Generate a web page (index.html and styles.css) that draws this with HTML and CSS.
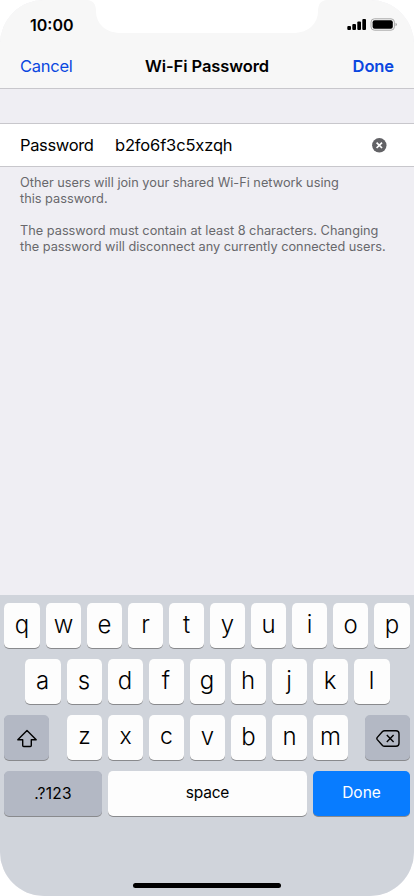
FILE: index.html
```html
<!DOCTYPE html>
<html lang="en">
<head>
    <meta charset="UTF-8">
    <meta name="viewport" content="width=device-width, initial-scale=1.0">
    <title>Wi-Fi Password</title>
    <link rel="stylesheet" href="styles.css">
</head>
<body>
    <div class="phone">
        <!-- Status bar -->
        <div class="status-bar">
            <span class="time">10:00</span>
            <svg class="status-icons" width="52" height="14" viewBox="0 0 52 14">
                <rect x="0.3" y="8" width="3.7" height="4" rx="1"/>
                <rect x="5.3" y="6" width="3.7" height="6" rx="1"/>
                <rect x="10.3" y="3.6" width="3.7" height="8.4" rx="1"/>
                <rect x="15.3" y="1" width="3.7" height="11" rx="1"/>
                <rect x="24" y="0.8" width="23.4" height="11.4" rx="3.4" fill="none" stroke="#a9a9a9"/>
                <rect x="25.6" y="2.3" width="20.2" height="8.4" rx="2"/>
                <path d="M48.5 4.7q1.4 .5 1.4 1.8t-1.4 1.8z" fill="#a9a9a9"/>
            </svg>
        </div>
        <svg class="notch" width="240" height="34" viewBox="0 0 240 34">
            <path d="M0 0C6 .4 9 4 9 11C9 24 19 33 34 33H206C221 33 231 24 231 11C231 4 234 .4 240 0Z" fill="#fff"/>
        </svg>

        <!-- Navigation -->
        <div class="nav">
            <a class="nav-link">Cancel</a>
            <h1 class="title">Wi-Fi Password</h1>
            <a class="nav-link done">Done</a>
        </div>

        <div class="content">
            <div class="password-row">
                <span class="label">Password</span>
                <span class="value">b2fo6f3c5xzqh</span>
                <svg class="clear" width="16" height="16" viewBox="0 0 16 16">
                    <circle cx="8.3" cy="8.3" r="7.2" fill="#626266"/>
                    <path d="M5.6 5.6l5.4 5.4M11 5.6l-5.4 5.4" stroke="#fff" stroke-width="1.7"/>
                </svg>
            </div>
            <p class="note first">Other users will join your shared Wi-Fi network using<br>this password.</p>
            <p class="note second">The password must contain at least 8 characters. Changing<br>the password will disconnect any currently connected users.</p>
        </div>

        <!-- Keyboard -->
        <div class="keyboard">
            <div class="keys">
                <span class="key edge">q</span>
                <span class="key">w</span>
                <span class="key">e</span>
                <span class="key">r</span>
                <span class="key">t</span>
                <span class="key">y</span>
                <span class="key">u</span>
                <span class="key">i</span>
                <span class="key">o</span>
                <span class="key edge">p</span>
            </div>
            <div class="keys">
                <span class="key edge">a</span>
                <span class="key">s</span>
                <span class="key">d</span>
                <span class="key">f</span>
                <span class="key">g</span>
                <span class="key">h</span>
                <span class="key">j</span>
                <span class="key">k</span>
                <span class="key edge">l</span>
            </div>
            <div class="keys">
                <span class="key gray shift">
                    <svg width="22" height="20" viewBox="0 0 22 20">
                        <path d="M11 1.5L1.8 10.8H6.7V16.5Q6.7 17.5 7.7 17.5H14.3Q15.3 17.5 15.3 16.5V10.8H20.2Z" fill="none" stroke="#000" stroke-width="1.4" stroke-linejoin="round"/>
                    </svg>
                </span>
                <span class="key small">z</span>
                <span class="key small">x</span>
                <span class="key small">c</span>
                <span class="key">v</span>
                <span class="key">b</span>
                <span class="key">n</span>
                <span class="key">m</span>
                <span class="key gray delete">
                    <svg width="24" height="18" viewBox="0 0 24 18">
                        <path d="M8.6 .7H20Q23 .7 23 3.7V13.3Q23 16.3 20 16.3H8.6Q7.4 16.3 6.5 15.4L1.3 9.6Q.4 8.5 1.3 7.4L6.5 1.6Q7.4 .7 8.6 .7Z" fill="none" stroke="#000" stroke-width="1.4"/>
                        <path d="M10.8 5.1L17.6 11.9M17.6 5.1L10.8 11.9" stroke="#000" stroke-width="1.4"/>
                    </svg>
                </span>
            </div>
            <div class="keys">
                <span class="key gray numbers">.?123</span>
                <span class="key space">space</span>
                <span class="key blue">Done</span>
            </div>
            <div class="home-bar"></div>
        </div>
    </div>
</body>
</html>
```
FILE: styles.css
```css
body {
    margin: 0;
    background: #fff;
    font-family: Inter, "Liberation Sans", sans-serif;
    color: #000;
}
.phone {
    position: relative;
    display: flex;
    flex-direction: column;
    width: 414px;
    height: 896px;
    overflow: hidden;
    border-radius: 44px;
    background: #efeef3;
}
.status-bar {
    display: flex;
    justify-content: space-between;
    box-sizing: border-box;
    height: 44px;
    padding: 15px 15px 0 30px;
    background: #f7f7f7;
}
.time {
    font-size: 16px;
    line-height: 20px;
    font-weight: 600;
}
.status-icons {
    margin-top: 3px;
}
.notch {
    position: absolute;
    top: 0;
    left: 87px;
}
.nav {
    display: flex;
    align-items: center;
    justify-content: space-between;
    height: 44px;
    padding: 0 20px;
    background: #f7f7f7;
    border-bottom: 1px solid #c8c7cc;
}
.nav-link {
    width: 70px;
    font-size: 16.5px;
    letter-spacing: -0.25px;
    color: #0a47e0;
}
.done {
    text-align: right;
    font-weight: 600;
    letter-spacing: -0.1px;
}
.title {
    margin: 0;
    font-size: 16.5px;
    font-weight: 600;
    letter-spacing: -0.1px;
}
.content {
    flex: 1;
    padding-top: 34px;
}
.password-row {
    display: flex;
    align-items: center;
    height: 42px;
    padding: 0 27px 0 20px;
    background: #fff;
    border-top: 1px solid #c8c7cc;
    border-bottom: 1px solid #c8c7cc;
    font-size: 16.5px;
}
.label {
    width: 95px;
    letter-spacing: -0.35px;
}
.value {
    flex: 1;
    letter-spacing: -0.15px;
}
.note {
    margin: 0 20px;
    font-size: 12.75px;
    line-height: 16px;
    color: #68686c;
    white-space: nowrap;
}
.first {
    margin-top: 8px;
}
.second {
    margin-top: 16px;
}
.keyboard {
    display: flex;
    flex-direction: column;
    align-items: center;
    gap: 11px;
    box-sizing: border-box;
    height: 301px;
    padding: 8px 4px;
    background: #d0d4db;
}
.keys {
    display: flex;
    justify-content: center;
    gap: 6px;
    width: 406px;
    height: 45px;
}
.key {
    display: flex;
    align-items: center;
    justify-content: center;
    box-sizing: border-box;
    width: 35px;
    height: 45px;
    padding-bottom: 3px;
    border-radius: 5px;
    background: #fdfdfd;
    box-shadow: 0 1px 0 #898a8d;
    font-size: 24px;
    font-weight: 300;
}
.edge {
    width: 36px;
}
.small {
    font-size: 23px;
    font-weight: 350;
}
.gray {
    background: #b3b8c4;
}
.shift {
    width: 45px;
    margin-right: 12px;
    padding: 2px 0 0 1px;
}
.delete {
    width: 45px;
    margin-left: 11px;
    padding: 2px 0 0 1px;
}
.numbers,
.space,
.blue {
    font-size: 15.5px;
    font-weight: 400;
    letter-spacing: -0.2px;
}
.numbers {
    width: 98px;
    padding-bottom: 1px;
    letter-spacing: 0.2px;
}
.space {
    width: 199px;
}
.blue {
    width: 97px;
    background: #087cff;
    color: #fff;
    letter-spacing: 0;
}
.home-bar {
    width: 148px;
    height: 5px;
    margin-top: auto;
    border-radius: 3px;
    background: #000;
}
```
